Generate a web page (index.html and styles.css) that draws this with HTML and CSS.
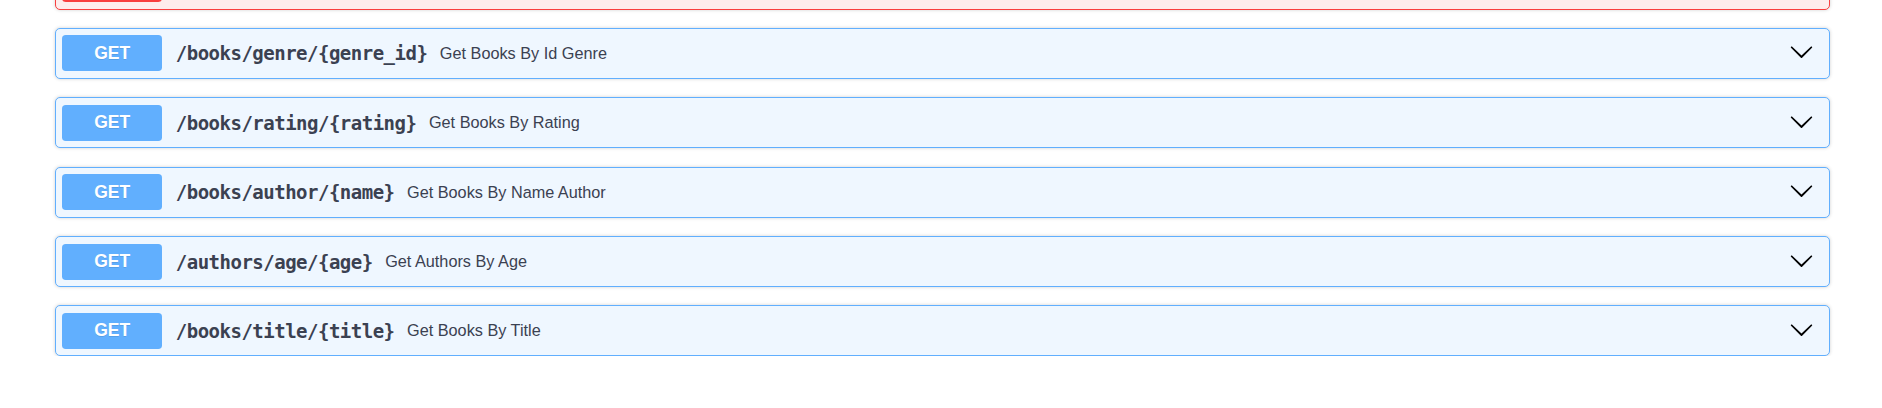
FILE: index.html
```html
<!DOCTYPE html>
<html>
<head>
<meta charset="utf-8">
<link rel="stylesheet" href="styles.css">
</head>
<body>
<div class="wrapper">
  <div class="opblock opblock-delete">
    <div class="summary">
      <span class="method method-delete"></span>
    </div>
  </div>

  <div class="opblock">
    <div class="summary">
      <span class="method">GET</span>
      <span class="path">/books/genre/{genre_id}</span>
      <span class="desc">Get Books By Id Genre</span>
      <svg class="arrow" viewBox="0 0 20 20" width="25" height="25"><path d="M17.418 6.109c.272-.268.709-.268.979 0s.271.701 0 .969l-7.908 7.83c-.27.268-.707.268-.979 0l-7.908-7.83c-.27-.268-.27-.701 0-.969.271-.268.709-.268.979 0L10 13.25l7.418-7.141z"/></svg>
    </div>
  </div>

  <div class="opblock">
    <div class="summary">
      <span class="method">GET</span>
      <span class="path">/books/rating/{rating}</span>
      <span class="desc">Get Books By Rating</span>
      <svg class="arrow" viewBox="0 0 20 20" width="25" height="25"><path d="M17.418 6.109c.272-.268.709-.268.979 0s.271.701 0 .969l-7.908 7.83c-.27.268-.707.268-.979 0l-7.908-7.83c-.27-.268-.27-.701 0-.969.271-.268.709-.268.979 0L10 13.25l7.418-7.141z"/></svg>
    </div>
  </div>

  <div class="opblock">
    <div class="summary">
      <span class="method">GET</span>
      <span class="path">/books/author/{name}</span>
      <span class="desc">Get Books By Name Author</span>
      <svg class="arrow" viewBox="0 0 20 20" width="25" height="25"><path d="M17.418 6.109c.272-.268.709-.268.979 0s.271.701 0 .969l-7.908 7.83c-.27.268-.707.268-.979 0l-7.908-7.83c-.27-.268-.27-.701 0-.969.271-.268.709-.268.979 0L10 13.25l7.418-7.141z"/></svg>
    </div>
  </div>

  <div class="opblock">
    <div class="summary">
      <span class="method">GET</span>
      <span class="path">/authors/age/{age}</span>
      <span class="desc">Get Authors By Age</span>
      <svg class="arrow" viewBox="0 0 20 20" width="25" height="25"><path d="M17.418 6.109c.272-.268.709-.268.979 0s.271.701 0 .969l-7.908 7.83c-.27.268-.707.268-.979 0l-7.908-7.83c-.27-.268-.27-.701 0-.969.271-.268.709-.268.979 0L10 13.25l7.418-7.141z"/></svg>
    </div>
  </div>

  <div class="opblock">
    <div class="summary">
      <span class="method">GET</span>
      <span class="path">/books/title/{title}</span>
      <span class="desc">Get Books By Title</span>
      <svg class="arrow" viewBox="0 0 20 20" width="25" height="25"><path d="M17.418 6.109c.272-.268.709-.268.979 0s.271.701 0 .969l-7.908 7.83c-.27.268-.707.268-.979 0l-7.908-7.83c-.27-.268-.27-.701 0-.969.271-.268.709-.268.979 0L10 13.25l7.418-7.141z"/></svg>
    </div>
  </div>
</div>
</body>
</html>
```

FILE: styles.css
```css
html, body {
  margin: 0;
  padding: 0;
  background: #fff;
  overflow: hidden;
}
body {
  font-family: "Liberation Sans", Arial, sans-serif;
}
.wrapper {
  width: 1775px;
  margin-left: 55px;
  margin-top: -41.5px;
  display: flex;
  flex-direction: column;
  gap: 18.4px;
}
.opblock {
  box-sizing: border-box;
  height: 51px;
  border: 1.25px solid #61affe;
  border-radius: 5px;
  background: #eff7ff;
  box-shadow: 0 0 3.75px rgba(0, 0, 0, 0.19);
}
.opblock-delete {
  border-color: #f93e3e;
  background: #feecec;
}
.summary {
  display: flex;
  align-items: center;
  height: 100%;
  padding: 0 6.25px;
  box-sizing: border-box;
}
.method {
  box-sizing: border-box;
  width: 100px;
  height: 36px;
  display: flex;
  align-items: center;
  justify-content: center;
  background: #61affe;
  color: #fff;
  font-weight: 700;
  font-size: 17.5px;
  border-radius: 3.75px;
  text-shadow: 0 1px 0 rgba(0, 0, 0, 0.1);
}
.method-delete {
  background: #f93e3e;
}
.path {
  font-family: "DejaVu Sans Mono", "Liberation Mono", monospace;
  font-weight: 700;
  font-size: 19px;
  letter-spacing: -0.5px;
  color: #3b4151;
  padding: 0 12.5px 0 13.5px;
}
.desc {
  font-size: 16.25px;
  color: #3b4151;
  flex: 1;
}
.arrow {
  width: 25px;
  height: 25px;
  margin-right: 8.5px;
  margin-top: -3px;
  fill: #000;
  flex: none;
}
```
